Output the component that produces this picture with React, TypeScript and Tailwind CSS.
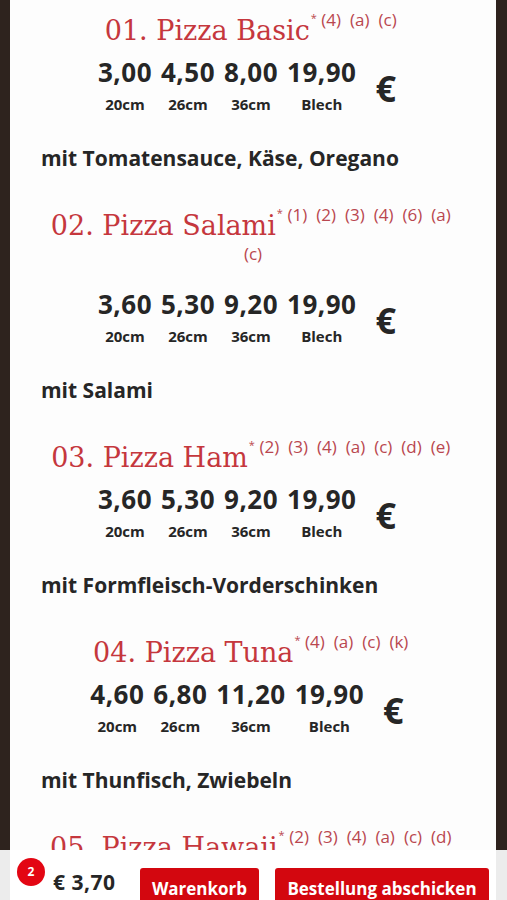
const pizzas = [
  {
    no: "01",
    name: "Pizza Basic",
    notes: ["(4)", "(a)", "(c)"],
    prices: ["3,00", "4,50", "8,00", "19,90"],
    desc: "mit Tomatensauce, Käse, Oregano",
  },
  {
    no: "02",
    name: "Pizza Salami",
    notes: ["(1)", "(2)", "(3)", "(4)", "(6)", "(a)", "(c)"],
    prices: ["3,60", "5,30", "9,20", "19,90"],
    desc: "mit Salami",
  },
  {
    no: "03",
    name: "Pizza Ham",
    notes: ["(2)", "(3)", "(4)", "(a)", "(c)", "(d)", "(e)"],
    prices: ["3,60", "5,30", "9,20", "19,90"],
    desc: "mit Formfleisch-Vorderschinken",
  },
  {
    no: "04",
    name: "Pizza Tuna",
    notes: ["(4)", "(a)", "(c)", "(k)"],
    prices: ["4,60", "6,80", "11,20", "19,90"],
    desc: "mit Thunfisch, Zwiebeln",
  },
  {
    no: "05",
    name: "Pizza Hawaii",
    notes: ["(2)", "(3)", "(4)", "(a)", "(c)", "(d)"],
    prices: ["4,60", "6,80", "11,20", "19,90"],
    desc: "mit Schinken, Ananas",
  },
];

const sizes = ["20cm", "26cm", "36cm", "Blech"];

const sans = "font-['Open_Sans','Noto_Sans',sans-serif]";

const PizzaItem = ({ pizza, first }: { pizza: (typeof pizzas)[number]; first: boolean }) => (
  <div className={first ? "" : "mt-[37px]"}>
    <h2 className="px-[38px] text-center font-['DejaVu_Serif',serif] text-[27px] leading-[34px] text-[#c5373d]">
      {pizza.no}. {pizza.name}
      <span className={`relative -top-[14px] text-[17px] text-[#b9474f] ${sans}`}>
        <span className="relative -top-[4px] ml-[1px] text-[11px]">*</span>
        {pizza.notes.map((n) => (
          <span key={n} className="mx-[4.5px] inline-block">
            {n}
          </span>
        ))}
      </span>
    </h2>

    <div className={`mt-[4px] flex items-center justify-center pr-[12px] font-bold text-[#262626] ${sans}`}>
      <div className="grid grid-cols-[auto_auto_auto_auto] gap-x-[9px] gap-y-[7px]">
        {pizza.prices.map((p, i) => (
          <div key={i} className="text-center text-[26px] leading-[30px] tracking-[0.5px]">
            {p}
          </div>
        ))}
        {sizes.map((s) => (
          <div key={s} className="text-center text-[15px] leading-[20px]">
            {s}
          </div>
        ))}
      </div>
      <div className="ml-[19px] mt-[6px] text-[36px] leading-[40px]">€</div>
    </div>

    <p className={`mt-[30px] pl-[31px] text-[21px] font-bold leading-[28px] text-[#262626] ${sans}`}>
      {pizza.desc}
    </p>
  </div>
);

export default function App() {
  return (
    <div className="flex h-[900px] flex-col overflow-hidden bg-[#2e231e]">
      <div className="flex-1 overflow-hidden">
        <div className="ml-[10px] mr-[11px] h-full bg-[#fdfdfd] pt-[14px]">
          {pizzas.map((p, i) => (
            <PizzaItem key={p.no} pizza={p} first={i === 0} />
          ))}
        </div>
      </div>

      <div className={`h-[50px] overflow-hidden bg-[#ececec] ${sans}`}>
        <div className="ml-[10px] mr-[11px] flex h-full items-start bg-white pl-[7px] pr-[7px]">
          <div className="mt-[8px] flex h-[28px] w-[28px] items-center justify-center rounded-full bg-[#e30613] text-[12px] font-bold text-white">
            2
          </div>
          <div className="ml-[8px] mt-[18px] text-[21px] font-bold leading-[28px] tracking-[0.5px] text-[#262626]">
            € 3,70
          </div>
          <div className="ml-auto mt-[18px] flex gap-[16px]">
            <button className="h-[40px] w-[119px] rounded-[3px] bg-[#d3070f] pb-[6px] pt-[8px] text-[17px] font-bold text-white">
              Warenkorb
            </button>
            <button className="h-[40px] w-[214px] rounded-[3px] bg-[#d3070f] pb-[6px] pt-[8px] text-[17px] font-bold text-white">
              Bestellung abschicken
            </button>
          </div>
        </div>
      </div>
    </div>
  );
}
